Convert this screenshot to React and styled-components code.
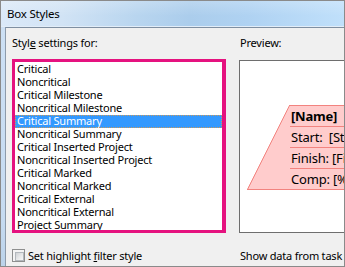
import React from "react";
import styled, { createGlobalStyle } from "styled-components";

const Global = createGlobalStyle`
  html, body { margin: 0; padding: 0; background: #f0f0f0; }
  body { width: 345px; height: 267px; overflow: hidden; }
  * { box-sizing: border-box; }
`;

const FONT = `"Noto Sans", "Liberation Sans", sans-serif`;

const Window = styled.div`
  width: 345px;
  height: 267px;
  border: 1px solid #8a8a8a;
  overflow: hidden;
  display: flex;
  flex-direction: column;
  font-family: ${FONT};
  font-size: 11px;
  letter-spacing: -0.2px;
  color: #000;
`;

const TitleBar = styled.div`
  flex: 0 0 26px;
  display: flex;
  align-items: center;
  padding: 0 0 1px 6px;
  background:
    linear-gradient(to bottom, rgba(255,255,255,0.2), rgba(255,255,255,0) 60%),
    linear-gradient(to right, #dbe9f8 0%, #d1e3f5 18%, #b8d5ef 40%, #abcdec 55%, #afd2f2 72%, #c0e0fb 100%);
  border-bottom: 1px solid #e2edf8;
  font-size: 11.5px;
`;

const Body = styled.div`
  flex: 1;
  display: flex;
  min-height: 0;
`;

const FrameStrip = styled.div`
  flex: 0 0 4px;
  background: linear-gradient(to bottom, #cde0f4, #c6dbf1 80%, #bcd3ea);
`;

const Client = styled.div`
  flex: 1;
  background: #f0f0f0;
  border-left: 1px solid #8d9bab;
  border-top: 1px solid #7f8fa1;
  display: flex;
  gap: 13px;
  padding-left: 6px;
  overflow: hidden;
`;

const Column = styled.div`
  display: flex;
  flex-direction: column;
  flex: 0 0 ${(p) => p.$w}px;
`;

const Label = styled.div`
  height: 13px;
  line-height: 13px;
  margin-top: 8px;
  padding-left: ${(p) => p.$indent || 0}px;
  white-space: nowrap;
`;

const Mn = styled.span`
  text-decoration: underline;
  text-underline-offset: 1px;
`;

const ListBox = styled.div`
  margin-top: 10px;
  height: 174px;
  border: 3px solid #e5127f;
  border-right-width: 4px;
  background: #fff;
  padding-top: 1px;
  overflow: hidden;
`;

const Item = styled.div`
  height: 13px;
  line-height: 12px;
  padding: 0 0 1px 2px;
  white-space: nowrap;
  background: ${(p) => (p.$sel ? "#3399ff" : "transparent")};
  color: ${(p) => (p.$sel ? "#fff" : "#000")};
  outline: ${(p) => (p.$sel ? "1px dotted #c99a5e" : "none")};
  outline-offset: -1px;
`;

const BottomRow = styled.div`
  margin-top: 16px;
  height: 13px;
  display: flex;
  align-items: center;
  gap: 3px;
  white-space: nowrap;
  padding-left: ${(p) => p.$indent || 0}px;
`;

const CheckBox = styled.span`
  width: 13px;
  height: 13px;
  flex: 0 0 13px;
  border: 1px solid #8e8f8f;
  background: #f4f4f4;
  padding: 2px;
  display: block;
  &::after {
    content: "";
    display: block;
    width: 100%;
    height: 100%;
    border: 1px solid #b3b8bd;
    background: linear-gradient(135deg, #cfd2d5 0%, #e8e9ea 55%, #f7f7f7 100%);
  }
`;

const PreviewBox = styled.div`
  margin-top: 11px;
  height: 173px;
  width: 140px;
  border: 1px solid #6e6e6e;
  border-right: none;
  background: #fff;
  padding: 44px 0 0 7px;
`;

const Card = styled.div`
  display: flex;
  height: 85px;
`;

const Slant = styled.svg`
  flex: 0 0 43px;
  display: block;
`;

const Table = styled.div`
  flex: 1;
  background: #ffcccc;
  border-top: 1px solid #f2837f;
  border-bottom: 1px solid #f2837f;
  display: flex;
  flex-direction: column;
`;

const Row = styled.div`
  height: ${(p) => (p.$last ? 20 : 21)}px;
  line-height: 20px;
  padding-left: 1px;
  font-size: 13px;
  font-weight: ${(p) => (p.$bold ? 700 : 400)};
  white-space: pre;
  border-bottom: ${(p) => (p.$last ? "none" : "1px solid #f2837f")};
  letter-spacing: -0.2px;
`;

const items = [
  "Critical",
  "Noncritical",
  "Critical Milestone",
  "Noncritical Milestone",
  "Critical Summary",
  "Noncritical Summary",
  "Critical Inserted Project",
  "Noncritical Inserted Project",
  "Critical Marked",
  "Noncritical Marked",
  "Critical External",
  "Noncritical External",
  "Project Summary",
];

export default function App() {
  return (
    <>
      <Global />
      <Window>
        <TitleBar>Box Styles</TitleBar>
        <Body>
          <FrameStrip />
          <Client>
            <Column $w={214}>
              <Label>
                Styl<Mn>e</Mn> settings for:
              </Label>
              <ListBox>
                {items.map((t, i) => (
                  <Item key={t} $sel={i === 4}>
                    {t}
                  </Item>
                ))}
              </ListBox>
              <BottomRow>
                <CheckBox />
                <span>
                  Set highlight <Mn>f</Mn>ilter style
                </span>
              </BottomRow>
            </Column>
            <Column $w={140}>
              <Label $indent={1}>Preview:</Label>
              <PreviewBox>
                <Card>
                  <Slant width="43" height="85" viewBox="0 0 43 85">
                    <polygon points="42.5,0.5 43,0.5 43,85 0,85 0,84.5" fill="#ffcccc" />
                    <line x1="42.5" y1="0.5" x2="0.5" y2="84.5" stroke="#f2837f" strokeWidth="1" />
                    <line x1="0" y1="84.5" x2="43" y2="84.5" stroke="#f2837f" strokeWidth="1" />
                    <line x1="42" y1="0.5" x2="43" y2="0.5" stroke="#f2837f" strokeWidth="1" />
                  </Slant>
                  <Table>
                    <Row $bold>[Name]</Row>
                    <Row>{"Start:  [Start]"}</Row>
                    <Row>{"Finish: [Finish]"}</Row>
                    <Row $last>{"Comp: [% Comp]"}</Row>
                  </Table>
                </Card>
              </PreviewBox>
              <BottomRow $indent={1}>Show data from task</BottomRow>
            </Column>
          </Client>
        </Body>
      </Window>
    </>
  );
}
